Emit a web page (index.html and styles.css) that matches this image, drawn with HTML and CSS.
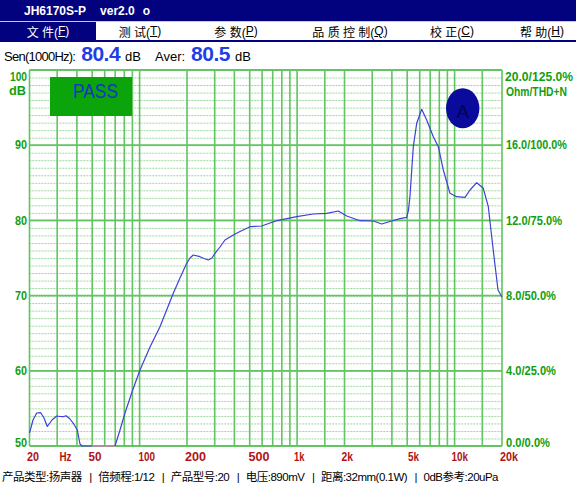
FILE: index.html
```html
<!DOCTYPE html>
<html lang="zh">
<head>
<meta charset="utf-8">
<title>JH6170S-P</title>
<link rel="stylesheet" href="styles.css">
</head>
<body>
<div class="app">
  <div class="titlebar">
    <span class="model">JH6170S-P</span>
    <span class="ver">ver2.0</span>
    <span class="ver-o">o</span>
  </div>
  <div class="menubar">
    <div class="mi mi-file active">文 件(<u>F</u>)</div>
    <div class="mi mi-test">测 试(<u>T</u>)</div>
    <div class="mi mi-param">参 数(<u>P</u>)</div>
    <div class="mi mi-qc">品 质 控 制(<u>Q</u>)</div>
    <div class="mi mi-cal">校 正(<u>C</u>)</div>
    <div class="mi mi-help">帮 助(<u>H</u>)</div>
  </div>
  <div class="readout">
    <span class="lbl lbl-sen">Sen(1000Hz):</span>
    <span class="big">80.4</span>
    <span class="unit">dB</span>
    <span class="lbl lbl-aver">Aver:</span>
    <span class="big">80.5</span>
    <span class="unit">dB</span>
  </div>
  <svg class="chart" width="576" height="400" viewBox="0 66 576 400" xmlns="http://www.w3.org/2000/svg">
    <defs>
      <pattern id="dots" x="29.5" y="70" width="3" height="7.52" patternUnits="userSpaceOnUse">
        <rect width="1.5" height="1" class="dot"/>
      </pattern>
    </defs>
    <rect x="29.5" y="70" width="472.5" height="376" fill="url(#dots)"/>
    <path class="vgrid" d="M29.5 70V446M57.2 70V446M76.9 70V446M92.2 70V446M104.7 70V446M115.2 70V446M124.3 70V446M132.4 70V446M139.6 70V446M187 70V446M214.7 70V446M234.4 70V446M249.7 70V446M262.1 70V446M272.7 70V446M281.8 70V446M289.9 70V446M297.1 70V446M324.8 70V446M344.5 70V446M372.2 70V446M391.9 70V446M407.2 70V446M419.7 70V446M430.2 70V446M439.3 70V446M447.4 70V446M454.6 70V446M482.3 70V446M502 70V446"/>
    <path class="hgrid" d="M29.5 70H502M29.5 145.2H502M29.5 220.4H502M29.5 295.6H502M29.5 370.8H502M29.5 446H502"/>

    <rect class="pass-box" x="50" y="77" width="82" height="39"/>
    <text class="pass-txt" x="73" y="97.5" textLength="45" lengthAdjust="spacingAndGlyphs">PASS</text>

    <ellipse class="badge" cx="462.7" cy="108.3" rx="16.7" ry="20"/>
    <text class="badge-txt" x="456.5" y="117.5">A</text>

    <polyline class="curve" points="29.5,433 33,420 36.7,413 40.7,412.7 44,418 47.3,426.5 52,420 56.7,416 60,416.5 63.3,416.7 66,415.7 70,419 73.3,423.3 77.3,430 80,444 82,446 92,446"/>
    <polyline class="curve-low" points="92,446 115,446"/>
    <polyline class="curve" points="115,446 120,430 125,413 132,392 140,370 150,347 160,326.7 173.3,293.3 180,278 186.7,263.3 190,258 193.3,255 200,256.7 204,258.5 208.3,260 212,258 215,253.3 220,247 225,240 233.3,235 240,231.5 250,226.7 261.7,226 270,223 276.7,220.7 283.3,219.3 296.7,216.7 313.3,214 326.7,213.3 338.3,211 346.7,216 360,220.7 373.3,221 381.7,224 391.7,221 400,218.7 406.7,217.3 408.5,210 410,196 413.3,146.7 416.7,123.3 421.7,109.3 426.7,120 433.3,136.7 438.3,146.7 443.3,170 450,193.3 456.7,196.7 465,197.3 470,190 476.7,182.7 483.3,188.3 488.3,206.7 491.7,236.7 495,265 498,290 502,297"/>

    <text class="ax" x="27" y="80.7" text-anchor="end" textLength="17" lengthAdjust="spacingAndGlyphs">100</text>
    <text class="ax" x="26" y="95" text-anchor="end" textLength="17" lengthAdjust="spacingAndGlyphs">dB</text>
    <text class="ax" x="27" y="149.3" text-anchor="end" textLength="12" lengthAdjust="spacingAndGlyphs">90</text>
    <text class="ax" x="27" y="224.5" text-anchor="end" textLength="12" lengthAdjust="spacingAndGlyphs">80</text>
    <text class="ax" x="27" y="299.7" text-anchor="end" textLength="12" lengthAdjust="spacingAndGlyphs">70</text>
    <text class="ax" x="27" y="374.9" text-anchor="end" textLength="12" lengthAdjust="spacingAndGlyphs">60</text>
    <text class="ax" x="27" y="446.7" text-anchor="end" textLength="12" lengthAdjust="spacingAndGlyphs">50</text>

    <text class="ax" x="505" y="80.7" textLength="68" lengthAdjust="spacingAndGlyphs">20.0/125.0%</text>
    <text class="ax" x="506" y="95.5" textLength="61" lengthAdjust="spacingAndGlyphs">Ohm/THD+N</text>
    <text class="ax" x="506" y="149.3" textLength="61" lengthAdjust="spacingAndGlyphs">16.0/100.0%</text>
    <text class="ax" x="506" y="224.5" textLength="56" lengthAdjust="spacingAndGlyphs">12.0/75.0%</text>
    <text class="ax" x="506" y="299.7" textLength="50" lengthAdjust="spacingAndGlyphs">8.0/50.0%</text>
    <text class="ax" x="506" y="374.9" textLength="50" lengthAdjust="spacingAndGlyphs">4.0/25.0%</text>
    <text class="ax" x="506" y="446.7" textLength="44" lengthAdjust="spacingAndGlyphs">0.0/0.0%</text>

    <text class="fx" x="27" y="461" textLength="12" lengthAdjust="spacingAndGlyphs">20</text>
    <text class="fx" x="59.5" y="461" textLength="12" lengthAdjust="spacingAndGlyphs">Hz</text>
    <text class="fx" x="88.5" y="461" textLength="13" lengthAdjust="spacingAndGlyphs">50</text>
    <text class="fx" x="138.5" y="461" textLength="16.5" lengthAdjust="spacingAndGlyphs">100</text>
    <text class="fx" x="185" y="461" textLength="21" lengthAdjust="spacingAndGlyphs">200</text>
    <text class="fx" x="248.5" y="461" textLength="21" lengthAdjust="spacingAndGlyphs">500</text>
    <text class="fx" x="294" y="461" textLength="10.5" lengthAdjust="spacingAndGlyphs">1k</text>
    <text class="fx" x="341.5" y="461" textLength="11.5" lengthAdjust="spacingAndGlyphs">2k</text>
    <text class="fx" x="408" y="461" textLength="11" lengthAdjust="spacingAndGlyphs">5k</text>
    <text class="fx" x="451.5" y="461" textLength="16.5" lengthAdjust="spacingAndGlyphs">10k</text>
    <text class="fx" x="500" y="461" textLength="18" lengthAdjust="spacingAndGlyphs">20k</text>
  </svg>
  <div class="footer">
    <span class="fi">产品类型:扬声器</span><span class="sep">|</span>
    <span class="fi">倍频程:1/12</span><span class="sep">|</span>
    <span class="fi">产品型号:20</span><span class="sep">|</span>
    <span class="fi">电压:890mV</span><span class="sep">|</span>
    <span class="fi">距离:32mm(0.1W)</span><span class="sep">|</span>
    <span class="fi">0dB参考:20uPa</span>
  </div>
</div>
</body>
</html>
```

FILE: styles.css
```css
html, body {
  margin: 0;
  padding: 0;
  background: #ffffff;
}

body {
  width: 576px;
  height: 484px;
  overflow: hidden;
  font-family: "Liberation Sans", "Noto Sans CJK SC", sans-serif;
  color: #000;
}

.app {
  display: flex;
  flex-direction: column;
  width: 576px;
  height: 484px;
}

/* title bar */
.titlebar {
  height: 21px;
  background: #02027e;
  color: #ffffff;
  display: flex;
  align-items: center;
  padding-left: 24px;
  font-weight: bold;
  font-size: 12px;
}

.ver {
  margin-left: 14px;
}

.ver-o {
  margin-left: 8px;
}

/* menu bar */
.menubar {
  height: 18px;
  border-top: 1px solid #c6c6ee;
  border-bottom: 2px solid #02027e;
  display: flex;
  font-family: "Liberation Sans", "Noto Sans CJK SC", sans-serif;
  font-size: 12px;
}

.mi {
  display: flex;
  align-items: center;
  justify-content: center;
  white-space: nowrap;
}

.mi u {
  text-decoration: underline;
  text-underline-offset: 1px;
}

.mi.active {
  background: #02027e;
  color: #ffffff;
}

.mi-file  { width: 96px; }
.mi-test  { width: 88px; }
.mi-param { width: 104px; }
.mi-qc    { width: 124px; }
.mi-cal   { width: 80px; }
.mi-help  { width: 84px; padding-left: 16px; box-sizing: border-box; }

/* readout row */
.readout {
  height: 24px;
  display: flex;
  align-items: baseline;
  padding-left: 4px;
  padding-top: 2px;
  box-sizing: border-box;
  font-size: 13px;
  line-height: 20px;
}

.lbl-sen {
  letter-spacing: -0.75px;
}

.big {
  font-weight: bold;
  font-size: 21px;
  color: #1e3fe6;
  margin-left: 6px;
  letter-spacing: -0.5px;
}

.unit {
  margin-left: 5px;
}

.lbl-aver {
  margin-left: 14px;
}

/* chart */
.chart {
  display: block;
  width: 576px;
  height: 400px;
}

.dot {
  fill: #78cc78;
}

.vgrid {
  stroke: #62c462;
  stroke-width: 1.6;
  fill: none;
}

.hgrid {
  stroke: #62c462;
  stroke-width: 1.8;
  fill: none;
}

.pass-box {
  fill: #0ba40b;
}

.pass-txt {
  font-family: "Liberation Sans", sans-serif;
  font-size: 20px;
  fill: #1434c8;
}

.badge {
  fill: #0a0a9c;
}

.badge-txt {
  font-family: "Liberation Sans", sans-serif;
  font-size: 19px;
  fill: #05054a;
}

.curve {
  fill: none;
  stroke: #4040d8;
  stroke-width: 1.2;
  stroke-linejoin: round;
}

.curve-low {
  fill: none;
  stroke: #e070c8;
  stroke-width: 1.2;
}

.ax {
  font-family: "Liberation Sans", sans-serif;
  font-weight: bold;
  font-size: 12px;
  fill: #11a011;
}

.fx {
  font-family: "Liberation Sans", sans-serif;
  font-weight: bold;
  font-size: 12px;
  fill: #b01414;
}

/* footer */
.footer {
  height: 18px;
  box-sizing: border-box;
  padding-top: 5px;
  padding-left: 2px;
  line-height: 13px;
  font-size: 11.5px;
  letter-spacing: -0.5px;
  white-space: nowrap;
  display: flex;
  align-items: baseline;
  font-family: "Liberation Sans", "Noto Sans CJK SC", sans-serif;
}

.sep {
  margin: 0 6.5px 0 7.5px;
}
```
